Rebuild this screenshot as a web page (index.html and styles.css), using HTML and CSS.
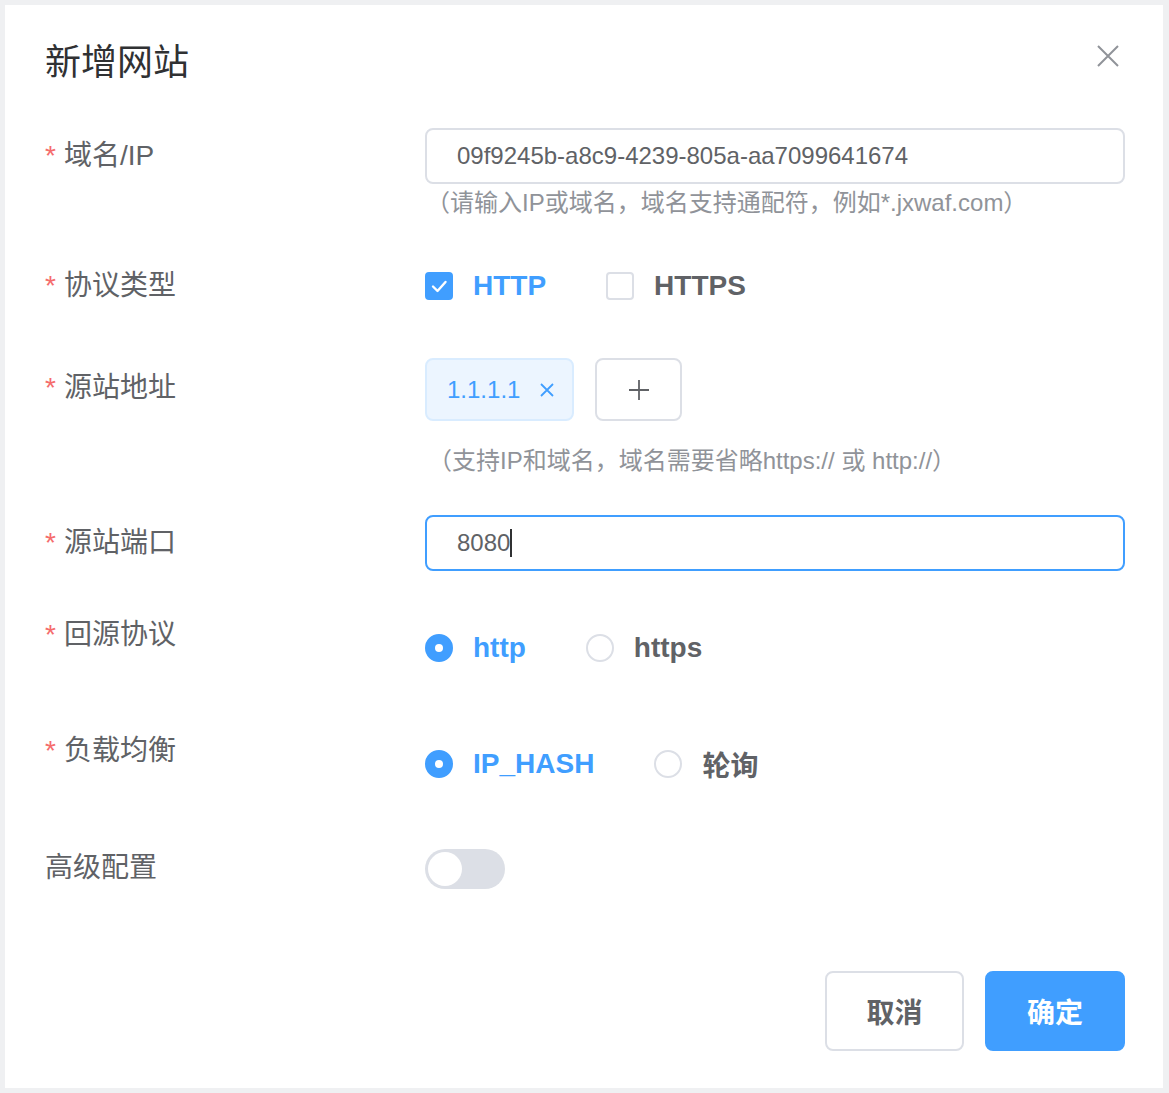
FILE: index.html
```html
<!DOCTYPE html>
<html lang="zh">
<head>
<meta charset="utf-8">
<title>新增网站</title>
<link rel="stylesheet" href="styles.css">
</head>
<body>
<div class="dialog">
  <div class="header">
    <div class="title">新增网站</div>
    <svg class="close" viewBox="0 0 22 22" width="22" height="22"><path d="M1 1 L21 21 M21 1 L1 21" stroke="#909399" stroke-width="2" fill="none"/></svg>
  </div>

  <div class="form">
    <div class="item item-1">
      <div class="label"><span class="star">*</span>域名/IP</div>
      <div class="content">
        <div class="input"><span class="value">09f9245b-a8c9-4239-805a-aa7099641674</span></div>
        <div class="hint hint-1">（请输入IP或域名，域名支持通配符，例如*.jxwaf.com）</div>
      </div>
    </div>

    <div class="item item-2">
      <div class="label"><span class="star">*</span>协议类型</div>
      <div class="content options">
        <label class="option checked">
          <span class="checkbox is-checked"><svg viewBox="0 0 28 28" width="28" height="28"><path d="M8 14.5 L12.5 19 L20.5 10" stroke="#fff" stroke-width="2.4" fill="none" stroke-linecap="round" stroke-linejoin="round"/></svg></span>
          <span class="opt-text">HTTP</span>
        </label>
        <label class="option">
          <span class="checkbox"></span>
          <span class="opt-text">HTTPS</span>
        </label>
      </div>
    </div>

    <div class="item item-3">
      <div class="label label-tall"><span class="star">*</span>源站地址</div>
      <div class="content">
        <div class="tags">
          <span class="tag">1.1.1.1<svg class="tag-x" viewBox="0 0 16 16" width="16" height="16"><path d="M2 2 L14 14 M14 2 L2 14" stroke="#409eff" stroke-width="1.8" fill="none"/></svg></span>
          <span class="add-btn"><svg viewBox="0 0 22 22" width="22" height="22"><path d="M11 1 V21 M1 11 H21" stroke="#606266" stroke-width="1.8" fill="none"/></svg></span>
        </div>
        <div class="hint hint-2">（支持IP和域名，域名需要省略https:// 或 http://）</div>
      </div>
    </div>

    <div class="item item-4">
      <div class="label"><span class="star">*</span>源站端口</div>
      <div class="content">
        <div class="input is-focus"><span class="value">8080</span><span class="caret"></span></div>
      </div>
    </div>

    <div class="item item-5">
      <div class="label"><span class="star">*</span>回源协议</div>
      <div class="content options radio-row">
        <label class="option checked">
          <span class="radio is-checked"></span>
          <span class="opt-text">http</span>
        </label>
        <label class="option">
          <span class="radio"></span>
          <span class="opt-text">https</span>
        </label>
      </div>
    </div>

    <div class="item item-6">
      <div class="label"><span class="star">*</span>负载均衡</div>
      <div class="content options radio-row">
        <label class="option checked">
          <span class="radio is-checked"></span>
          <span class="opt-text">IP_HASH</span>
        </label>
        <label class="option">
          <span class="radio"></span>
          <span class="opt-text">轮询</span>
        </label>
      </div>
    </div>

    <div class="item item-7">
      <div class="label">高级配置</div>
      <div class="content switch-wrap">
        <span class="switch"><span class="knob"></span></span>
      </div>
    </div>
  </div>

  <div class="footer">
    <button class="btn btn-default">取消</button>
    <button class="btn btn-primary">确定</button>
  </div>
</div>
</body>
</html>
```

FILE: styles.css
```css
* {
  box-sizing: border-box;
}

html, body {
  margin: 0;
  padding: 0;
}

body {
  background: #eff0f2;
  width: 1169px;
  height: 1093px;
  overflow: hidden;
  font-family: "Liberation Sans", "Noto Sans CJK SC", sans-serif;
  color: #606266;
}

.dialog {
  margin: 5px 6px 5px 5px;
  width: 1158px;
  height: 1083px;
  background: #fff;
  padding: 34px 38px 0 40px;
}

.header {
  display: flex;
  justify-content: space-between;
  align-items: flex-start;
  height: 48px;
}

.title {
  font-size: 36px;
  line-height: 48px;
  color: #303133;
}

.close {
  margin-top: 6px;
  margin-right: 6px;
}

.form {
  margin-top: 41px;
}

.item {
  display: flex;
  align-items: flex-start;
}

.label {
  width: 380px;
  flex: none;
  font-size: 28px;
  line-height: 56px;
  color: #606266;
}

.label-tall {
  line-height: 60px;
}

.star {
  color: #f56c6c;
  margin-right: 8px;
}

.content {
  flex: 1;
  min-width: 0;
}

.item-2 { margin-top: 37px; }
.item-3 { margin-top: 44px; }
.item-4 { margin-top: 36px; }
.item-5 { margin-top: 36px; }
.item-6 { margin-top: 47px; }
.item-7 { margin-top: 48px; }

.input {
  height: 56px;
  border: 2px solid #dcdfe6;
  border-radius: 8px;
  padding-left: 30px;
  display: flex;
  align-items: center;
  font-size: 24px;
  color: #606266;
}

.input.is-focus {
  border-color: #409eff;
}

.caret {
  display: inline-block;
  width: 2px;
  height: 28px;
  background: #303133;
  margin-left: 0;
}

.hint {
  font-size: 24px;
  line-height: 36px;
  color: #909399;
  margin-left: 1px;
}

.hint-1 {
  margin-top: 1px;
}

.hint-2 {
  margin-top: 22px;
  margin-left: 3px;
}

.options {
  display: flex;
  align-items: center;
  height: 56px;
}

.radio-row {
  margin-top: 13px;
}

.option {
  display: flex;
  align-items: center;
  margin-right: 60px;
  font-size: 28px;
  font-weight: 700;
  color: #606266;
}

.option.checked .opt-text {
  color: #409eff;
}

.opt-text {
  margin-left: 20px;
}

.checkbox {
  width: 28px;
  height: 28px;
  border: 2px solid #dcdfe6;
  border-radius: 4px;
  background: #fff;
  display: block;
}

.checkbox.is-checked {
  background: #409eff;
  border-color: #409eff;
}

.checkbox svg {
  display: block;
  margin: -2px;
}

.radio {
  width: 28px;
  height: 28px;
  border: 2px solid #dcdfe6;
  border-radius: 50%;
  background: #fff;
  display: flex;
  align-items: center;
  justify-content: center;
}

.radio.is-checked {
  background: #409eff;
  border-color: #409eff;
}

.radio.is-checked::after {
  content: "";
  width: 8px;
  height: 8px;
  border-radius: 50%;
  background: #fff;
}

.tags {
  display: flex;
  align-items: center;
  gap: 21px;
}

.tag {
  height: 63px;
  display: inline-flex;
  align-items: center;
  padding: 0 17px 0 20px;
  background: #ecf5ff;
  border: 2px solid #d9ecff;
  border-radius: 8px;
  color: #409eff;
  font-size: 24px;
}

.tag-x {
  margin-left: 19px;
}

.add-btn {
  width: 87px;
  height: 63px;
  border: 2px solid #dcdfe6;
  border-radius: 8px;
  display: inline-flex;
  align-items: center;
  justify-content: center;
  background: #fff;
}

.switch-wrap {
  height: 56px;
  display: flex;
  align-items: center;
  padding-top: 2px;
}

.switch {
  width: 80px;
  height: 40px;
  border-radius: 20px;
  background: #dcdfe6;
  display: flex;
  align-items: center;
  padding-left: 3px;
}

.knob {
  width: 34px;
  height: 34px;
  border-radius: 50%;
  background: #fff;
}

.footer {
  display: flex;
  justify-content: flex-end;
  gap: 21px;
  margin-top: 75px;
}

.btn {
  height: 80px;
  border-radius: 8px;
  font-family: "Liberation Sans", "Noto Sans CJK SC", sans-serif;
  font-size: 28px;
  font-weight: 700;
  padding: 0;
  cursor: pointer;
}

.btn-default {
  width: 139px;
  border: 2px solid #dcdfe6;
  background: #fff;
  color: #606266;
}

.btn-primary {
  width: 140px;
  border: 2px solid #409eff;
  background: #409eff;
  color: #fff;
}
```
